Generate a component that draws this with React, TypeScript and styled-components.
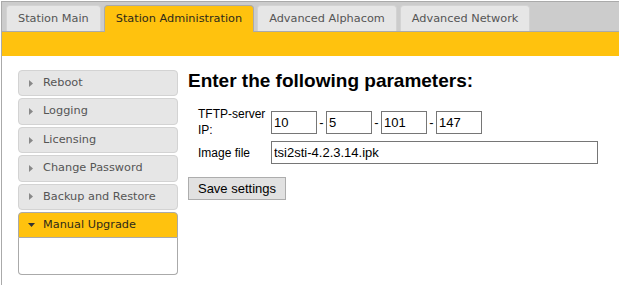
import React from 'react'
import styled, { createGlobalStyle } from 'styled-components'

const GlobalStyle = createGlobalStyle`
  html, body {
    margin: 0;
    padding: 0;
    background: #fff;
    overflow: hidden;
  }
`

const Frame = styled.div`
  margin: 1px 0 0 1px;
  width: 618px;
  height: 284px;
  overflow: hidden;
  box-sizing: border-box;
  border-top: 1px solid #aaa;
  border-left: 1px solid #aaa;
  background: #fff;
  font-family: "DejaVu Sans", Verdana, sans-serif;
  font-size: 11.3px;
`

const TabBar = styled.ul`
  display: flex;
  list-style: none;
  margin: 0;
  padding: 3px 0 0 4px;
  background: #ccc;
  border-bottom: 1px solid #aaa;
`

const Tab = styled.li<{ $active?: boolean }>`
  margin-right: 3px;
  margin-bottom: ${p => (p.$active ? '-1px' : '0')};
  padding: 5px 11px ${p => (p.$active ? '6px' : '5px')};
  line-height: 15px;
  border: 1px solid ${p => (p.$active ? '#aaa' : '#d3d3d3')};
  border-bottom: 0;
  border-radius: 4px 4px 0 0;
  background: ${p => (p.$active ? '#ffc20e' : '#e6e6e6')};
  color: ${p => (p.$active ? '#2e2a1a' : '#555')};
  white-space: nowrap;
  cursor: pointer;
`

const Band = styled.div`
  height: 24px;
  background: #ffc20e;
`

const Body = styled.div`
  display: flex;
  gap: 10px;
  padding: 14px 0 0 16px;
`

const Sidebar = styled.div`
  width: 160px;
  flex-shrink: 0;
  display: flex;
  flex-direction: column;
  gap: 2px;
`

const Header = styled.div<{ $active?: boolean }>`
  display: flex;
  align-items: center;
  padding: 5px 6px 5px 0;
  line-height: 14.4px;
  border: 1px solid ${p => (p.$active ? '#aaa' : '#d3d3d3')};
  border-radius: ${p => (p.$active ? '4px 4px 0 0' : '4px')};
  background: ${p => (p.$active ? '#ffc20e' : '#e6e6e6')};
  color: ${p => (p.$active ? '#2e2a1a' : '#555')};
  white-space: nowrap;
  cursor: pointer;
`

const Arrow = styled.span`
  display: flex;
  justify-content: center;
  width: 24px;
`

const Panel = styled.div`
  height: 35.6px;
  margin-top: -2px;
  border: 1px solid #aaa;
  border-top: 0;
  border-radius: 0 0 4px 4px;
  background: #fff;
`

const Main = styled.div`
  font-family: "Liberation Sans", Arial, sans-serif;
  color: #000;
`

const Title = styled.h1`
  margin: 0;
  font-size: 19px;
  line-height: 22px;
  font-weight: bold;
  white-space: nowrap;
`

const Form = styled.div`
  display: grid;
  grid-template-columns: 73px auto;
  align-items: center;
  row-gap: 3px;
  margin: 14px 0 0 10px;
`

const Label = styled.div`
  font-size: 12px;
  line-height: 16px;
`

const IpRow = styled.div`
  display: flex;
  align-items: center;
`

const Field = styled.input<{ $wide?: boolean }>`
  box-sizing: border-box;
  width: ${p => (p.$wide ? '327px' : '46px')};
  height: 23px;
  padding: 1px 2px;
  border: 1px solid #767676;
  font-family: "Liberation Sans", Arial, sans-serif;
  font-size: 13px;
  color: #000;
  outline: none;
`

const Dash = styled.span`
  width: 5px;
  margin: 0 2px;
  font-size: 13px;
  text-align: center;
`

const SaveButton = styled.button`
  margin-top: 13px;
  height: 23px;
  width: 98px;
  padding: 0;
  background: #e1e1e1;
  border: 1px solid #adadad;
  font-family: "Liberation Sans", Arial, sans-serif;
  font-size: 13px;
  color: #000;
`

const RightIcon = () => (
  <svg width="4" height="7" viewBox="0 0 4 7"><path d="M0 0 L4 3.5 L0 7 Z" fill="#888" /></svg>
)

const DownIcon = () => (
  <svg width="7" height="4" viewBox="0 0 7 4"><path d="M0 0 L7 0 L3.5 4 Z" fill="#333" /></svg>
)

const tabs = ['Station Main', 'Station Administration', 'Advanced Alphacom', 'Advanced Network']
const sections = ['Reboot', 'Logging', 'Licensing', 'Change Password', 'Backup and Restore']

export default function App() {
  return (
    <>
      <GlobalStyle />
      <Frame>
        <TabBar>
          {tabs.map(t => (
            <Tab key={t} $active={t === 'Station Administration'}>{t}</Tab>
          ))}
        </TabBar>
        <Band />
        <Body>
          <Sidebar>
            {sections.map(s => (
              <Header key={s}>
                <Arrow><RightIcon /></Arrow>
                {s}
              </Header>
            ))}
            <Header $active>
              <Arrow><DownIcon /></Arrow>
              Manual Upgrade
            </Header>
            <Panel />
          </Sidebar>
          <Main>
            <Title>Enter the following parameters:</Title>
            <Form>
              <Label>TFTP-server<br />IP:</Label>
              <IpRow>
                <Field defaultValue="10" />
                <Dash>-</Dash>
                <Field defaultValue="5" />
                <Dash>-</Dash>
                <Field defaultValue="101" />
                <Dash>-</Dash>
                <Field defaultValue="147" />
              </IpRow>
              <Label>Image file</Label>
              <Field $wide defaultValue="tsi2sti-4.2.3.14.ipk" />
            </Form>
            <SaveButton>Save settings</SaveButton>
          </Main>
        </Body>
      </Frame>
    </>
  )
}
